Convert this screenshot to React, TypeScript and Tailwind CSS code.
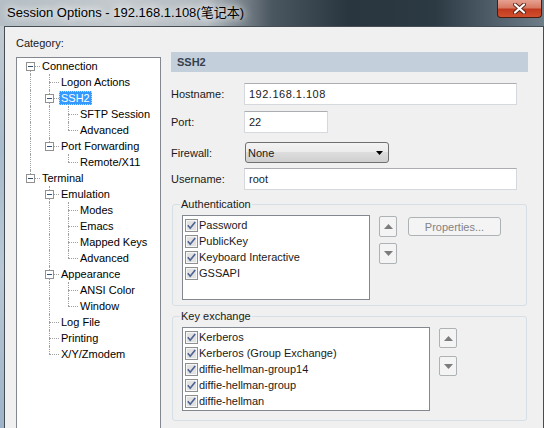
type TreeNode = { label: string; children?: TreeNode[]; selected?: boolean }

const tree: TreeNode[] = [
  {
    label: 'Connection',
    children: [
      { label: 'Logon Actions' },
      { label: 'SSH2', selected: true, children: [{ label: 'SFTP Session' }, { label: 'Advanced' }] },
      { label: 'Port Forwarding', children: [{ label: 'Remote/X11' }] },
    ],
  },
  {
    label: 'Terminal',
    children: [
      {
        label: 'Emulation',
        children: [{ label: 'Modes' }, { label: 'Emacs' }, { label: 'Mapped Keys' }, { label: 'Advanced' }],
      },
      { label: 'Appearance', children: [{ label: 'ANSI Color' }, { label: 'Window' }] },
      { label: 'Log File' },
      { label: 'Printing' },
      { label: 'X/Y/Zmodem' },
    ],
  },
]

type Row = { node: TreeNode; guides: boolean[]; first: boolean; last: boolean }

function flatten(nodes: TreeNode[], guides: boolean[], out: Row[]): Row[] {
  nodes.forEach((node, i) => {
    const last = i === nodes.length - 1
    out.push({ node, guides, first: i === 0, last })
    if (node.children) flatten(node.children, [...guides, !last], out)
  })
  return out
}

const rows = flatten(tree, [], [])

const dots = 'absolute border-dotted border-[#a0a0a0]'

function TreeRow({ row }: { row: Row }) {
  const { node, guides, first, last } = row
  const root = guides.length === 0
  return (
    <div className="flex h-4 items-center">
      {guides.map((g, i) => (
        <div key={i} className="relative h-4 w-[19px] shrink-0">
          {g ? <span className={`${dots} left-[9px] top-0 h-4 border-l`} /> : null}
        </div>
      ))}
      <div className="relative h-4 w-[19px] shrink-0">
        {!(root && first) ? <span className={`${dots} left-[9px] top-0 h-2 border-l`} /> : null}
        {!last ? <span className={`${dots} left-[9px] top-2 h-2 border-l`} /> : null}
        <span className={`${dots} left-[9px] top-2 w-[10px] border-t`} />
        {node.children ? (
          <span className="absolute left-[5px] top-[4px] h-[9px] w-[9px] border border-[#919191] bg-white">
            <span className="absolute left-[1px] top-[3px] h-px w-[5px] bg-[#34506e]" />
          </span>
        ) : null}
      </div>
      <span
        className={
          node.selected
            ? 'h-[14px] whitespace-nowrap border border-dotted border-[#ffd27a] bg-[#3399ff] px-[1px] leading-[12px] text-white'
            : 'h-[14px] whitespace-nowrap border border-transparent px-[1px] leading-[12px] text-black'
        }
      >
        {node.label}
      </span>
    </div>
  )
}

function TextBox({ value, className }: { value: string; className: string }) {
  return (
    <div
      className={`flex h-[22px] items-center border border-[#d5d9de] border-t-[#abadb3] bg-white pb-px pl-[4px] ${className}`}
    >
      {value}
    </div>
  )
}

function CheckBox() {
  return (
    <svg width="13" height="13" viewBox="0 0 13 13" className="shrink-0">
      <rect x="0.5" y="0.5" width="12" height="12" fill="#f6f6f6" stroke="#8e8f8f" />
      <rect x="2" y="2" width="9" height="9" fill="#e2e2e2" />
      <path d="M2.8 6.3 L5.2 9.2 L10.2 3" stroke="#4f6394" strokeWidth="1.7" fill="none" />
    </svg>
  )
}

function CheckList({ items, className }: { items: string[]; className: string }) {
  return (
    <div className={`border border-[#828790] bg-white pt-px ${className}`}>
      {items.map((item) => (
        <div key={item} className="flex h-4 items-center pl-[2px]">
          <CheckBox />
          <span className="ml-px whitespace-nowrap">{item}</span>
        </div>
      ))}
    </div>
  )
}

function ArrowButton({ up, className }: { up?: boolean; className: string }) {
  return (
    <div
      className={`flex w-[18px] items-center justify-center rounded-[2px] border border-[#adb2b5] bg-[#f4f4f4] ${className}`}
    >
      <svg width="9" height="5" viewBox="0 0 9 5">
        <path d={up ? 'M0 5 L4.5 0 L9 5 Z' : 'M0 0 L4.5 5 L9 0 Z'} fill="#7c7c7c" />
      </svg>
    </div>
  )
}

function GroupBox({ title, className, children }: { title: string; className: string; children: React.ReactNode }) {
  return (
    <div className={`relative ml-px w-[355px] rounded-[3px] border border-[#d5dfe5] ${className}`}>
      <span className="absolute -top-[8px] left-[7px] bg-[#f0f0f0] px-px leading-[14px]">{title}</span>
      <div className="flex items-start pl-[9px] pt-[10px]">{children}</div>
    </div>
  )
}

export default function App() {
  return (
    <div className="flex h-[428px] w-[544px] flex-col overflow-hidden bg-[#9fb4c8] font-['Liberation_Sans','Noto_Sans_CJK_SC',sans-serif] text-[11px] leading-[14px] text-[#1a1a1a]">
      <div className="flex h-[26px] shrink-0 items-start justify-between bg-[linear-gradient(to_right,#b4bec4_0%,#c4cace_22%,#b2bac0_38%,#4a5660_50%,#29353f_64%,#2c3a44_80%,#6e7e88_100%)]">
        <span className="pl-[7px] text-[13px] leading-[26px] text-black [text-shadow:0_0_8px_#fff,0_0_10px_#fff]">
          Session Options - 192.168.1.108(笔记本)
        </span>
        <div className="mr-[2px] flex h-[18px] w-[45px] items-center justify-center rounded-b-[4px] border border-t-0 border-[#4a1c12] bg-[linear-gradient(to_bottom,#e6a190_0%,#d77a64_45%,#c23a1e_55%,#d2502e_100%)]">
          <svg width="13" height="11" viewBox="0 0 13 11">
            <path d="M2 1.5 L11 9.5 M11 1.5 L2 9.5" stroke="#5a2418" strokeWidth="4" strokeLinecap="round" />
            <path d="M2 1.5 L11 9.5 M11 1.5 L2 9.5" stroke="#ffffff" strokeWidth="2.2" strokeLinecap="round" />
          </svg>
        </div>
      </div>

      <div className="flex flex-1">
        <div className="w-[4px] shrink-0 bg-[linear-gradient(to_bottom,#c2cad0,#a9bccd_30%,#b9c8d4_60%,#9cb2c8)]" />
        <div className="flex flex-1 items-start border-l border-r border-t border-[#454d55] bg-[#f0f0f0]">
          <div className="flex flex-col pl-[11px] pt-[9px]">
            <span className="h-[14px]">Category:</span>
            <div className="mt-[7px] h-[380px] w-[145px] border border-[#828790] bg-white pl-[4px]">
              {rows.map((row, i) => (
                <TreeRow key={i} row={row} />
              ))}
            </div>
          </div>

          <div className="ml-[10px] flex w-[357px] flex-col pt-[25px]">
            <div className="h-[20px] bg-[#c3cfdb] pl-[6px] font-bold leading-[20px] text-[#36414e]">SSH2</div>

            <div className="mt-[11px] flex h-[22px] items-center">
              <span className="w-[73px]">Hostname:</span>
              <TextBox value="192.168.1.108" className="w-[273px] tracking-[0.5px]" />
            </div>
            <div className="mt-[6px] flex h-[22px] items-center">
              <span className="w-[73px]">Port:</span>
              <TextBox value="22" className="w-[84px]" />
            </div>
            <div className="mt-[9px] flex h-[21px] items-center">
              <span className="w-[74px]">Firewall:</span>
              <div className="flex h-[21px] w-[144px] items-center justify-between rounded-[3px] border border-[#707070] bg-[linear-gradient(to_bottom,#f3f3f3_0%,#ebebeb_50%,#dddddd_50%,#cfcfcf_100%)] pl-[2px] pr-[5px]">
                <span>None</span>
                <svg width="7" height="4" viewBox="0 0 7 4">
                  <path d="M0 0 L3.5 4 L7 0 Z" fill="#000" />
                </svg>
              </div>
            </div>
            <div className="mt-[5px] flex h-[22px] items-center">
              <span className="w-[73px]">Username:</span>
              <TextBox value="root" className="w-[273px]" />
            </div>

            <GroupBox title="Authentication" className="mt-[14px] h-[102px]">
              <CheckList
                items={['Password', 'PublicKey', 'Keyboard Interactive', 'GSSAPI']}
                className="h-[85px] w-[188px]"
              />
              <div className="ml-[9px] mt-[1px] flex flex-col">
                <ArrowButton up className="h-[21px]" />
                <ArrowButton className="mt-[6px] h-[21px]" />
              </div>
              <div className="ml-[11px] mt-[2px] flex h-[19px] w-[93px] items-center justify-center rounded-[3px] border border-[#adb2b5] bg-[#f4f4f4] text-[#838383]">
                Properties...
              </div>
            </GroupBox>

            <GroupBox title="Key exchange" className="mt-[10px] h-[105px]">
              <CheckList
                items={[
                  'Kerberos',
                  'Kerberos (Group Exchange)',
                  'diffie-hellman-group14',
                  'diffie-hellman-group',
                  'diffie-hellman',
                ]}
                className="h-[84px] w-[248px]"
              />
              <div className="ml-[9px] mt-[1px] flex flex-col">
                <ArrowButton up className="h-[20px]" />
                <ArrowButton className="mt-[8px] h-[20px]" />
              </div>
            </GroupBox>
          </div>
        </div>
      </div>
    </div>
  )
}
